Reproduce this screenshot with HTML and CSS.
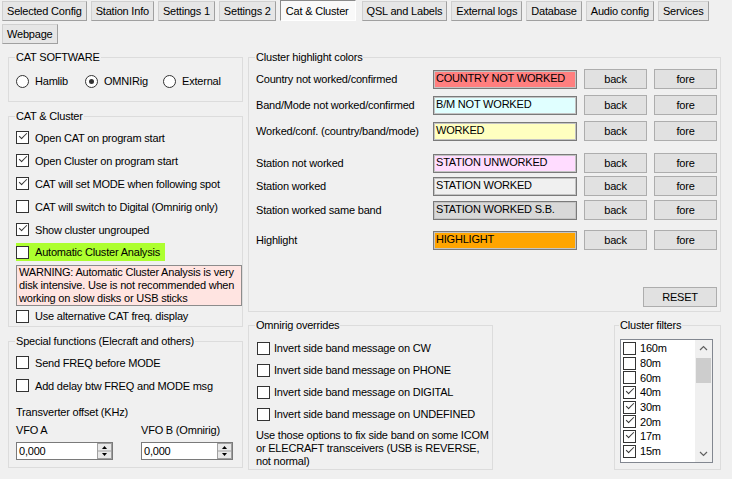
FILE: index.html
```html
<!DOCTYPE html>
<html lang="en">
<head>
  <meta charset="UTF-8">
  <title>Settings - Cat &amp; Cluster</title>
  <link rel="stylesheet" href="styles.css">
</head>
<body>
  <div class="tabs">
    <span class="tab">Selected Config</span>
    <span class="tab">Station Info</span>
    <span class="tab">Settings 1</span>
    <span class="tab">Settings 2</span>
    <span class="tab sel">Cat &amp; Cluster</span>
    <span class="tab">QSL and Labels</span>
    <span class="tab">External logs</span>
    <span class="tab">Database</span>
    <span class="tab">Audio config</span>
    <span class="tab">Services</span>
    <span class="tab">Webpage</span>
  </div>

  <div class="content">
    <div class="left">
      <fieldset class="grp soft">
        <legend>CAT SOFTWARE</legend>
        <div class="radios">
          <label class="radio"><span class="dot"></span>Hamlib</label>
          <label class="radio"><span class="dot on"></span>OMNIRig</label>
          <label class="radio"><span class="dot"></span>External</label>
        </div>
      </fieldset>

      <fieldset class="grp catcl">
        <legend>CAT &amp; Cluster</legend>
        <label class="check"><span class="box on"></span>Open CAT on program start</label>
        <label class="check"><span class="box on"></span>Open Cluster on program start</label>
        <label class="check"><span class="box on"></span>CAT will set MODE when following spot</label>
        <label class="check"><span class="box"></span>CAT will switch to Digital (Omnirig only)</label>
        <label class="check"><span class="box on"></span>Show cluster ungrouped</label>
        <label class="check hl"><span class="box"></span>Automatic Cluster Analysis</label>
        <div class="warn">WARNING: Automatic Cluster Analysis is very<br>disk intensive. Use is not recommended when<br>working on slow disks or USB sticks</div>
        <label class="check alt"><span class="box"></span>Use alternative CAT freq. display</label>
      </fieldset>

      <fieldset class="grp special">
        <legend>Special functions (Elecraft and others)</legend>
        <label class="check"><span class="box"></span>Send FREQ before MODE</label>
        <label class="check"><span class="box"></span>Add delay btw FREQ and MODE msg</label>
        <div class="caption">Transverter offset (KHz)</div>
        <div class="vfos">
          <div class="vfo vfo-a">
            <div class="vfo-label">VFO A</div>
            <div class="num">
              <span class="num-val">0,000</span>
              <svg class="spin" width="15" height="16" viewBox="0 0 15 16">
                <rect x="0.5" y="0.5" width="14" height="15" fill="#e8e8e8" stroke="#a0a0a0"/>
                <line x1="1" y1="8" x2="14" y2="8" stroke="#a0a0a0"/>
                <path d="M5 6h5l-2.5-3z" fill="#000"/>
                <path d="M5 10h5l-2.5 3z" fill="#000"/>
              </svg>
            </div>
          </div>
          <div class="vfo vfo-b">
            <div class="vfo-label">VFO B (Omnirig)</div>
            <div class="num">
              <span class="num-val">0,000</span>
              <svg class="spin" width="15" height="16" viewBox="0 0 15 16">
                <rect x="0.5" y="0.5" width="14" height="15" fill="#e8e8e8" stroke="#a0a0a0"/>
                <line x1="1" y1="8" x2="14" y2="8" stroke="#a0a0a0"/>
                <path d="M5 6h5l-2.5-3z" fill="#000"/>
                <path d="M5 10h5l-2.5 3z" fill="#000"/>
              </svg>
            </div>
          </div>
        </div>
      </fieldset>
    </div>

    <div class="right">
      <fieldset class="grp colors">
        <legend>Cluster highlight colors</legend>
        <div class="crow">
          <span class="lbl">Country not worked/confirmed</span>
          <span class="swatch sw-country">COUNTRY NOT WORKED</span>
          <button class="btn">back</button>
          <button class="btn">fore</button>
        </div>
        <div class="crow">
          <span class="lbl">Band/Mode not worked/confirmed</span>
          <span class="swatch sw-band">B/M NOT WORKED</span>
          <button class="btn">back</button>
          <button class="btn">fore</button>
        </div>
        <div class="crow">
          <span class="lbl">Worked/conf. (country/band/mode)</span>
          <span class="swatch sw-worked">WORKED</span>
          <button class="btn">back</button>
          <button class="btn">fore</button>
        </div>
        <div class="crow station-first">
          <span class="lbl">Station not worked</span>
          <span class="swatch sw-unworked">STATION UNWORKED</span>
          <button class="btn">back</button>
          <button class="btn">fore</button>
        </div>
        <div class="crow station-worked">
          <span class="lbl">Station worked</span>
          <span class="swatch sw-station">STATION WORKED</span>
          <button class="btn">back</button>
          <button class="btn">fore</button>
        </div>
        <div class="crow station-band">
          <span class="lbl">Station worked same band</span>
          <span class="swatch sw-sameband">STATION WORKED S.B.</span>
          <button class="btn">back</button>
          <button class="btn">fore</button>
        </div>
        <div class="crow highlight">
          <span class="lbl">Highlight</span>
          <span class="swatch sw-highlight">HIGHLIGHT</span>
          <button class="btn">back</button>
          <button class="btn">fore</button>
        </div>
        <div class="reset-row">
          <button class="btn reset">RESET</button>
        </div>
      </fieldset>

      <div class="bottom">
        <fieldset class="grp omni">
          <legend>Omnirig overrides</legend>
          <label class="check"><span class="box"></span>Invert side band message on CW</label>
          <label class="check"><span class="box"></span>Invert side band message on PHONE</label>
          <label class="check"><span class="box"></span>Invert side band message on DIGITAL</label>
          <label class="check"><span class="box"></span>Invert side band message on UNDEFINED</label>
          <p class="note">Use those options to fix side band on some ICOM<br>or ELECRAFT transceivers (USB is REVERSE,<br>not normal)</p>
        </fieldset>

        <fieldset class="grp filters">
          <legend>Cluster filters</legend>
          <div class="listbox">
            <div class="items">
              <label class="item"><span class="box"></span>160m</label>
              <label class="item"><span class="box"></span>80m</label>
              <label class="item"><span class="box"></span>60m</label>
              <label class="item"><span class="box on"></span>40m</label>
              <label class="item"><span class="box on"></span>30m</label>
              <label class="item"><span class="box on"></span>20m</label>
              <label class="item"><span class="box on"></span>17m</label>
              <label class="item"><span class="box on"></span>15m</label>
            </div>
            <div class="scrollbar">
              <svg class="arrow" width="17" height="17" viewBox="0 0 17 17">
                <path d="M5 10l3.5-3.5 3.5 3.5" fill="none" stroke="#606060" stroke-width="1.2"/>
              </svg>
              <div class="track"><div class="thumb"></div></div>
              <svg class="arrow" width="17" height="17" viewBox="0 0 17 17">
                <path d="M5 7l3.5 3.5 3.5-3.5" fill="none" stroke="#606060" stroke-width="1.2"/>
              </svg>
            </div>
          </div>
        </fieldset>
      </div>
    </div>
  </div>
</body>
</html>
```

FILE: styles.css
```css
body {
  margin: 0;
  width: 732px;
  height: 479px;
  overflow: hidden;
  background-color: #f0f0f0;
  font-family: "Liberation Sans", Arial, sans-serif;
  font-size: 11px;
  letter-spacing: -0.2px;
  color: #000;
}

/* tab strip (button style) */
.tabs {
  display: flex;
  flex-wrap: wrap;
  gap: 3px 4px;
  padding: 1px 0 0 2px;
}
.tab {
  box-sizing: border-box;
  height: 20px;
  line-height: 18px;
  padding: 0 4px;
  background-color: #e6e6e6;
  border: 1px solid #a0a0a0;
  border-top-color: #d0d0d0;
  border-left-color: #d0d0d0;
  white-space: nowrap;
}
.tab.sel {
  height: 21px;
  margin-top: -1px;
  margin-right: 2px;
  padding: 1px 6px 0 5px;
  background-color: #f9f9f9;
  border-color: #8a8a8a #ffffff #ffffff #8a8a8a;
}

.content {
  display: grid;
  grid-template-columns: 235px 473px;
  column-gap: 5px;
  padding: 7px 0 0 8px;
}

/* group boxes */
.grp {
  margin: 0;
  min-width: 0;
  padding: 0 7px;
  border: 1px solid #dcdcdc;
}
.grp legend {
  padding: 0 1px;
  margin-left: -1px;
  line-height: 13px;
}

.soft {
  padding-top: 10px;
  padding-bottom: 13px;
}
.catcl {
  margin-top: 8px;
  padding-top: 3px;
  padding-bottom: 0;
}
.special {
  margin-top: 8px;
  padding-top: 3px;
  padding-bottom: 7px;
}

/* radios */
.radios {
  display: grid;
  grid-template-columns: 69px 78px auto;
  height: 14px;
  align-items: center;
}
.radio {
  display: flex;
  align-items: center;
  gap: 6px;
}
.dot {
  position: relative;
  box-sizing: border-box;
  width: 13px;
  height: 13px;
  border: 1px solid #333;
  border-radius: 50%;
  background-color: #fff;
}
.dot.on::after {
  content: '';
  position: absolute;
  inset: 3px;
  border-radius: 50%;
  background-color: #333;
}

/* checkboxes */
.check {
  display: flex;
  align-items: center;
  gap: 6px;
  height: 23px;
  white-space: nowrap;
}
.box {
  position: relative;
  flex: none;
  box-sizing: border-box;
  width: 13px;
  height: 13px;
  border: 1px solid #333;
  background-color: #fff;
}
.box.on::after {
  content: '';
  position: absolute;
  left: 2px;
  top: 1px;
  width: 7px;
  height: 3px;
  border-left: 1px solid #333;
  border-bottom: 1px solid #333;
  transform: rotate(-45deg);
}
.check.hl {
  width: 149px;
  height: 18px;
  margin: 2px 0 3px;
  background-color: #adff2f;
}
.check.alt {
  height: 20px;
}

.warn {
  margin: 4px -7px 0 0;
  padding: 0 2px;
  line-height: 13px;
  background-color: #ffe4e1;
  border: 1px solid #8c8c8c;
  white-space: nowrap;
}

.caption {
  margin-top: 9px;
  line-height: 13px;
}
.vfos {
  display: flex;
  gap: 28px;
  margin-top: 5px;
}
.vfo-label {
  line-height: 13px;
  margin-bottom: 5px;
}
.num {
  display: flex;
  align-items: center;
  justify-content: space-between;
  box-sizing: border-box;
  height: 18px;
  padding: 0 0 0 2px;
  background-color: #fff;
  border: 1px solid #7a7a7a;
}
.vfo-a .num {
  width: 97px;
}
.vfo-b .num {
  width: 92px;
}
.spin {
  display: block;
}

/* colours group */
.colors {
  padding: 5px 3px 4px 7px;
}
.crow {
  display: grid;
  grid-template-columns: 170px 144px 63px 63px;
  column-gap: 7px;
  align-items: center;
  height: 20px;
  margin-top: 6px;
}
.crow:first-of-type {
  margin-top: 0;
}
.crow.station-first {
  margin-top: 12px;
}
.crow.station-worked {
  margin-top: 3px;
}
.crow.station-band {
  margin-top: 4px;
}
.crow.highlight {
  margin-top: 10px;
}
.lbl {
  white-space: nowrap;
}
.swatch {
  box-sizing: border-box;
  height: 19px;
  line-height: 15px;
  padding-left: 2px;
  border: 1px solid #7a7a7a;
  box-shadow: inset 0 0 0 1px #c4c4c4;
  white-space: nowrap;
}
.sw-country { background-color: #ff7f7f; }
.sw-band { background-color: #e0ffff; }
.sw-worked { background-color: #ffffc0; }
.sw-unworked { background-color: #ffdcff; }
.sw-station { background-color: #f0f0f0; }
.sw-sameband { background-color: #d8d8d8; }
.sw-highlight { background-color: #ffa500; }

.btn {
  box-sizing: border-box;
  height: 20px;
  padding: 0;
  font-family: inherit;
  font-size: 11px;
  letter-spacing: inherit;
  color: #000;
  background-color: #e1e1e1;
  border: 1px solid #adadad;
}
.reset-row {
  display: flex;
  justify-content: flex-end;
  margin-top: 37px;
}
.reset {
  width: 74px;
}

/* bottom right */
.bottom {
  display: flex;
  justify-content: space-between;
  margin-top: 7px;
}
.omni {
  width: 245px;
  box-sizing: border-box;
  padding-top: 5px;
  padding-bottom: 1px;
}
.omni .check {
  height: 22px;
  gap: 4px;
  padding-left: 1px;
}
.note {
  margin: 4px 0 0;
  line-height: 13px;
  white-space: nowrap;
}

.filters {
  width: 107px;
  box-sizing: border-box;
  padding: 7px 7px 6px 5px;
}
.listbox {
  display: flex;
  box-sizing: border-box;
  height: 124px;
  background-color: #fff;
  border: 1px solid #828790;
}
.items {
  flex: 1;
  padding: 1px 0 0 2px;
  overflow: hidden;
}
.item {
  display: flex;
  align-items: center;
  gap: 4px;
  height: 14.7px;
}
.scrollbar {
  display: flex;
  flex-direction: column;
  width: 17px;
  background-color: #f0f0f0;
}
.arrow {
  display: block;
  flex: none;
}
.track {
  flex: 1;
  padding: 1px 1px 0;
}
.thumb {
  height: 25px;
  background-color: #cdcdcd;
}
```
